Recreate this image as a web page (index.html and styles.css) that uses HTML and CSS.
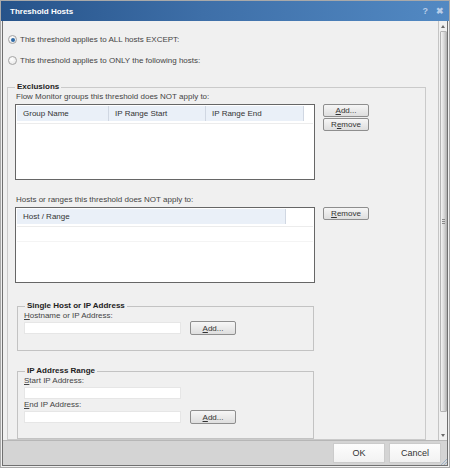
FILE: index.html
```html
<!DOCTYPE html>
<html lang="en">
<head>
  <meta charset="UTF-8" />
  <title>Threshold Hosts</title>
  <link rel="stylesheet" href="styles.css">
</head>
<body>
  <div class="window">
    <div class="titlebar">
      <span class="title">Threshold Hosts</span>
      <span class="title-tools">
        <span>?</span>
        <span>&#x2716;</span>
      </span>
    </div>

    <div class="frame">
      <div class="viewport">
        <div class="pane">
          <label class="radio-row">
            <span class="radio checked"></span>
            This threshold applies to ALL hosts EXCEPT:
          </label>
          <label class="radio-row">
            <span class="radio"></span>
            This threshold applies to ONLY the following hosts:
          </label>

          <fieldset class="group exclusions">
            <legend>Exclusions</legend>
            <div class="field-label">Flow Monitor groups this threshold does NOT apply to:</div>
            <div class="list-row">
              <div class="grid">
                <div class="grid-head">
                  <div class="col col-name">Group Name</div>
                  <div class="col col-start">IP Range Start</div>
                  <div class="col col-end">IP Range End</div>
                </div>
                <div class="grid-line"></div>
              </div>
              <div class="side-buttons">
                <button class="btn"><u>A</u>dd...</button>
                <button class="btn">R<u>e</u>move</button>
              </div>
            </div>

            <div class="field-label second">Hosts or ranges this threshold does NOT apply to:</div>
            <div class="list-row">
              <div class="grid">
                <div class="grid-head">
                  <div class="col col-host">Host / Range</div>
                </div>
                <div class="grid-line"></div>
                <div class="grid-line faint"></div>
              </div>
              <div class="side-buttons">
                <button class="btn"><u>R</u>emove</button>
              </div>
            </div>

            <fieldset class="group sub single">
              <legend>Single Host or IP Address</legend>
              <div class="sub-label"><u>H</u>ostname or IP Address:</div>
              <div class="input-row">
                <input class="text-input" type="text" />
                <button class="btn"><u>A</u>dd...</button>
              </div>
            </fieldset>

            <fieldset class="group sub range">
              <legend>IP Address Range</legend>
              <div class="sub-label"><u>S</u>tart IP Address:</div>
              <input class="text-input start" type="text" />
              <div class="sub-label end"><u>E</u>nd IP Address:</div>
              <div class="input-row">
                <input class="text-input" type="text" />
                <button class="btn"><u>A</u>dd...</button>
              </div>
            </fieldset>
          </fieldset>
        </div>

        <div class="scrollbar">
          <div class="arrow up"></div>
          <div class="thumb"><span class="grip"></span></div>
          <div class="arrow down"></div>
        </div>
      </div>

      <div class="footer">
        <button class="dlg-btn">OK</button>
        <button class="dlg-btn">Cancel</button>
        <svg class="resize-grip" width="6" height="6" viewBox="0 0 6 6">
          <path d="M0 6 L6 0 M3 6 L6 3" stroke="#9fb3c8" stroke-width="1" />
        </svg>
      </div>
    </div>
  </div>
</body>
</html>
```

FILE: styles.css
```css
* {
  box-sizing: border-box;
}

body {
  margin: 0;
  font-family: "Liberation Sans", Arial, sans-serif;
  font-size: 8px;
  color: #3c3c3c;
}

u {
  text-decoration: underline;
}

/* dialog shell */
.window {
  width: 450px;
  height: 468px;
  border: 1px solid #a9a9a9;
  background: #f0f0f0;
  display: flex;
  flex-direction: column;
}

.titlebar {
  height: 20px;
  flex-shrink: 0;
  display: flex;
  align-items: center;
  padding: 0 5px 0 9px;
  background: linear-gradient(to right, #26538a, #3e6fa8 45%, #5289c3);
  color: #fff;
  font-weight: bold;
  font-size: 8px;
}

.title {
  flex: 1;
}

.title-tools {
  display: flex;
  gap: 8px;
  color: #b7cde8;
  font-size: 9px;
}

.frame {
  flex: 1;
  min-height: 0;
  margin: 0 1px 1px;
  border: 1px solid #707070;
  border-top: 0;
  display: flex;
  flex-direction: column;
}

.viewport {
  height: 419px;
  display: flex;
}

.pane {
  flex: 1;
  overflow: hidden;
  padding: 8px 0 0 4px;
}

/* radios */
.radio-row {
  display: flex;
  align-items: center;
  gap: 3px;
  height: 21px;
  padding-left: 1px;
  color: #444;
}

.radio {
  width: 9px;
  height: 9px;
  border: 1px solid #a4a4a4;
  border-radius: 50%;
  background: radial-gradient(circle at 40% 35%, #fff, #e2e2e2);
  display: flex;
  align-items: center;
  justify-content: center;
}

.radio.checked::after {
  content: "";
  width: 4px;
  height: 4px;
  border-radius: 50%;
  background: #2e6aa6;
}

/* group boxes */
.group {
  margin: 0;
  min-width: 0;
  border: 1px solid #cacaca;
}

.group legend {
  padding: 0 2px;
  line-height: 10px;
  font-weight: bold;
  color: #222;
}

.exclusions {
  margin-top: 11px;
  width: 419px;
  padding: 0 0 0 7px;
}

.field-label {
  line-height: 10px;
  padding-left: 1px;
  color: #444;
}

.field-label.second {
  margin-top: 15px;
}

.list-row {
  display: flex;
  align-items: flex-start;
  margin-top: 2px;
}

.grid {
  width: 300px;
  height: 76px;
  border: 1px solid #666;
  background: #fff;
  padding: 1px;
}

.grid-head {
  display: flex;
  height: 15px;
}

.col {
  line-height: 15px;
  padding-left: 6px;
  background: #eaf0f8;
  border-right: 1px solid #d0d7e2;
  color: #333;
}

.col-name { width: 92px; }
.col-start { width: 97px; }
.col-end { width: 98px; }
.col-host { width: 269px; }

.grid-line {
  height: 1px;
  margin-top: 2px;
  background: #ececec;
}

.grid-line.faint {
  margin-top: 14px;
  background: #f4f4f4;
}

.side-buttons {
  display: flex;
  flex-direction: column;
  gap: 1px;
  margin-left: 8px;
}

.btn {
  width: 46px;
  height: 13px;
  padding: 0;
  font: inherit;
  color: #333;
  border: 1px solid #8e8e8e;
  border-radius: 2px;
  background: linear-gradient(#f6f6f6, #dedede);
}

/* nested boxes */
.sub {
  width: 297px;
  margin-left: 2px;
  border-color: #c3c3c3;
  padding: 0 6px 15px;
}

.sub legend {
  margin-left: 1px;
}

.single {
  margin-top: 18px;
}

.range {
  margin-top: 15px;
  padding-bottom: 14px;
}

.sub-label {
  line-height: 10px;
  color: #444;
}

.sub-label.end {
  margin-top: 1px;
}

.input-row {
  display: flex;
  align-items: center;
  height: 14px;
}

.input-row .btn {
  height: 14px;
  margin-left: 9px;
}

.text-input {
  width: 157px;
  height: 12px;
  border: 1px solid #e6e6e6;
  background: #fff;
  padding: 0;
  display: block;
}

.text-input.start {
  margin-top: 1px;
}

/* scrollbar */
.scrollbar {
  width: 9px;
  border-left: 1px solid #c4c4c4;
  display: flex;
  flex-direction: column;
}

.arrow {
  height: 10px;
  display: flex;
  align-items: center;
  justify-content: center;
}

.arrow::after {
  content: "";
  border-left: 2px solid transparent;
  border-right: 2px solid transparent;
}

.arrow.up::after {
  border-bottom: 3px solid #6a6a6a;
}

.arrow.down {
  margin-top: auto;
}

.arrow.down::after {
  border-top: 3px solid #6a6a6a;
}

.thumb {
  width: 7px;
  height: 381px;
  align-self: flex-end;
  border: 1px solid #b4b4b4;
  border-radius: 1px;
  background: linear-gradient(to right, #f4f4f4, #dadada 55%, #bebebe);
  display: flex;
  align-items: center;
  justify-content: center;
}

.grip {
  width: 3px;
  height: 5px;
  background: repeating-linear-gradient(#8a8a8a 0 1px, transparent 1px 2px);
}

/* bottom bar */
.footer {
  flex: 1;
  border-top: 1px solid #b6b6b6;
  background: #d4d4d4;
  display: flex;
  align-items: center;
  justify-content: flex-end;
  gap: 4px;
}

.dlg-btn {
  width: 52px;
  height: 20px;
  padding: 0;
  font-family: inherit;
  font-size: 9px;
  color: #333;
  border: 1px solid #cbcbcb;
  background: linear-gradient(#fdfdfd, #f2f2f2);
}

.resize-grip {
  align-self: flex-end;
  margin-left: -4px;
}
```
